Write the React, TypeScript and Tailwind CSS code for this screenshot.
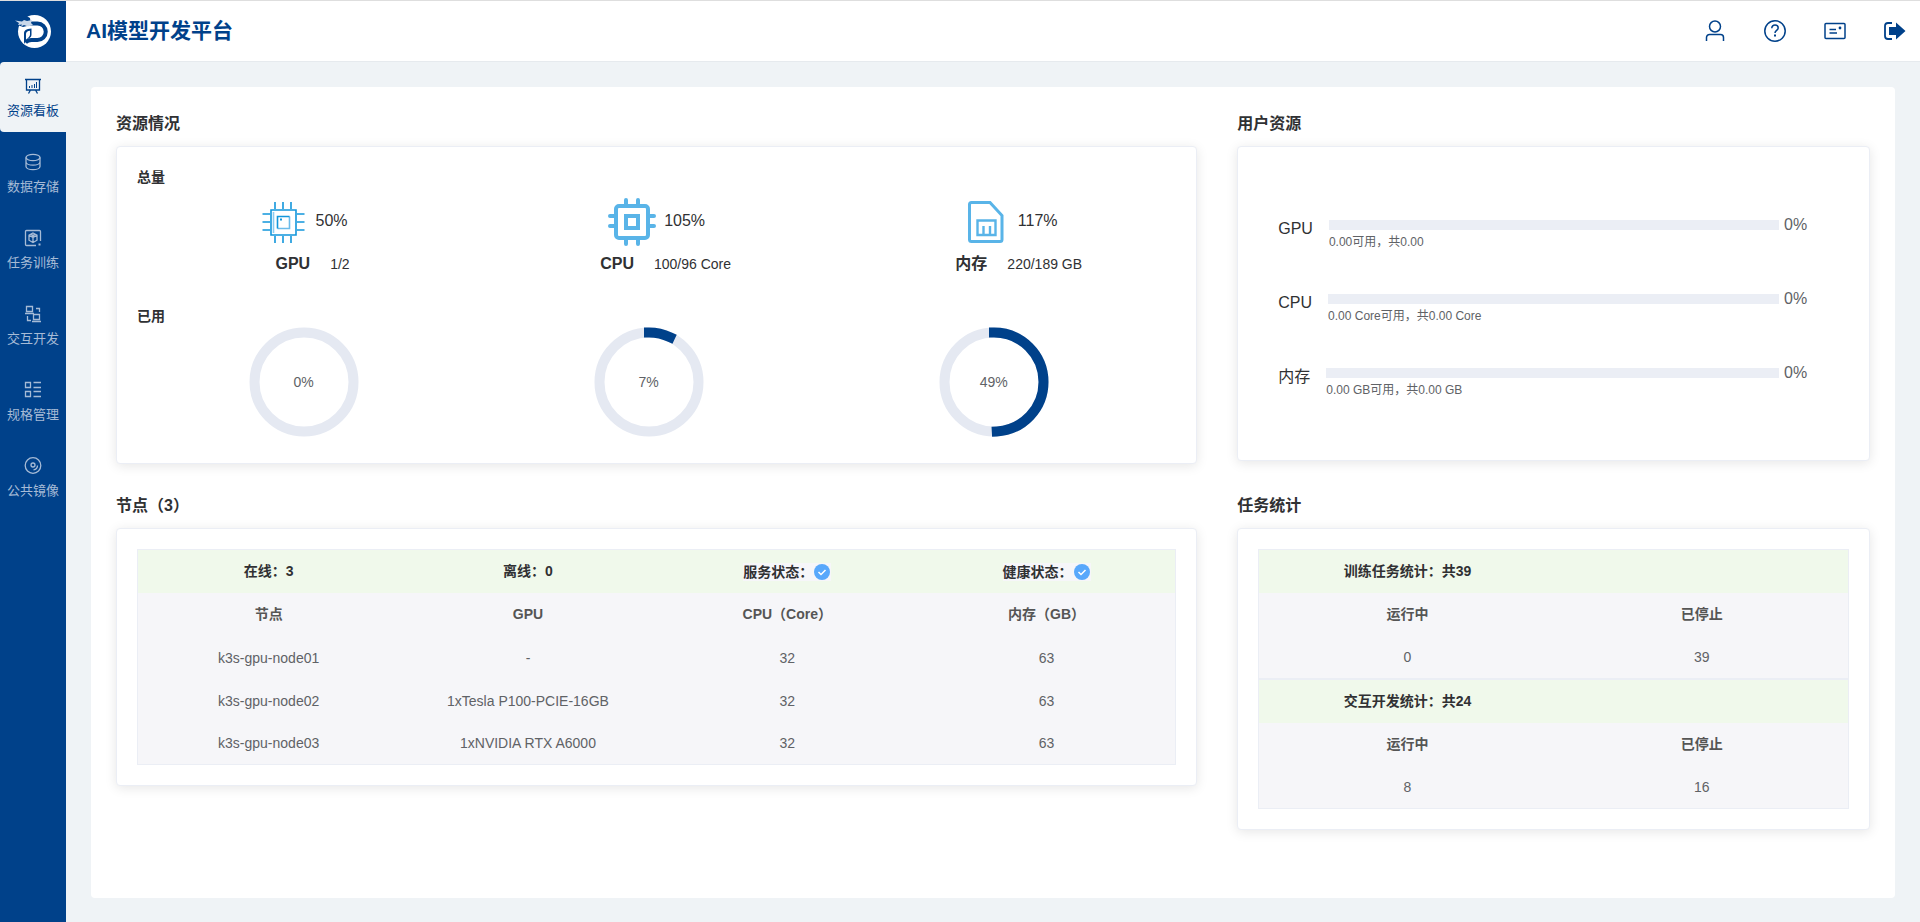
import React from "react";

interface MenuItem {
  label: string;
  icon: React.ReactNode;
}

interface Usage {
  name: string;
  icon: React.ReactNode;
  percent: number;
  amount: string;
  used: number;
}

interface SectionProps {
  title: string;
  children: React.ReactNode;
}

const menu: MenuItem[] = [
  {
    label: "资源看板",
    icon: (
      <>
        <path d="M1 2.500h16M2.500 2.500v10.500h13V2.500M6.500 13l-2 3.500M11.500 13l2 3.500" />
        <path d="M5.500 9v2M8 8v3M10.500 7v4M12.500 5v6" strokeWidth="1" />
      </>
    ),
  },
  {
    label: "数据存储",
    icon: (
      <>
        <ellipse cx="9" cy="4.500" rx="7" ry="3.200" />
        <path d="M2 4.500v9c0 1.800 3.100 3.200 7 3.200s7-1.400 7-3.200v-9M2 9c0 1.800 3.100 3.200 7 3.200s7-1.400 7-3.200" />
      </>
    ),
  },
  {
    label: "任务训练",
    icon: (
      <>
        <path d="M12 16.500H2.500a1 1 0 0 1-1-1v-13a1 1 0 0 1 1-1h13a1 1 0 0 1 1 1V12" />
        <path d="M9 4l4 2.200v5L9 13.500l-4-2.300v-5zM5 6.200l4 2.300 4-2.300M9 8.500v5M7 5.200l4 2.200M11 5.200L7 7.400" />
        <path d="M14.500 15.500h2" strokeWidth="2" />
      </>
    ),
  },
  {
    label: "交互开发",
    icon: (
      <path d="M2.500 1.500h6v5h-6zM1 8.500h9M12 3.500h3.500V7M3.500 11v4.500H7M9.500 9.500h6v5h-6zM8 16.500h9" />
    ),
  },
  {
    label: "规格管理",
    icon: (
      <path d="M1.500 1.500h5v5h-5zM1.500 10.500h5v5h-5zM9.500 1.500H17M9.500 6.500H17M9.500 10.500H17M9.500 15.500H17" />
    ),
  },
  {
    label: "公共镜像",
    icon: (
      <>
        <circle cx="9" cy="8.500" r="7.800" />
        <circle cx="9" cy="8" r="2" />
        <path d="M13.500 8.500a4.500 4.500 0 0 1-4 4.300" />
      </>
    ),
  },
];

const GpuIcon = () => (
  <svg viewBox="0 0 48 48" className="size-12" fill="none" stroke="#1296db" strokeWidth="1.600">
    <path d="M11 12h25v25H11z" />
    <path d="M15 4v7M23 4v7M31 4v7M15 38v7M23 38v7M31 38v7M2.500 16H10M2.500 24H10M2.500 32H10M37 16h7.500M37 24h7.500M37 32h7.500" />
    <path d="M13.500 14v21" stroke="#8ccbf0" />
    <path d="M29.500 18.500v12h-12" stroke="#6cbcea" />
    <path d="M29.500 18.500h-12v12" />
    <path d="M20 21.500h2" strokeWidth="2" />
  </svg>
);

const CpuIcon = () => (
  <svg viewBox="0 0 48 48" className="size-12" fill="none" stroke="#59b4e8" strokeWidth="4">
    <rect x="8" y="8" width="32" height="32" rx="3" />
    <path d="M18 18h12v12H18z" />
    <path
      d="M18 2v4M30 2v4M18 42v4M30 42v4M2 18h4M2 28h4M42 18h4M42 28h4"
      strokeLinecap="round"
    />
  </svg>
);

const MemoryIcon = () => (
  <svg viewBox="0 0 48 48" className="size-12" fill="none" stroke="#59b4e8" strokeWidth="3">
    <path d="M9.500 4.500h18.500L40 17.500v24a2 2 0 0 1-2 2H9.500a2 2 0 0 1-2-2v-35a2 2 0 0 1 2-2z" />
    <path d="M15.500 22.500h18V37h-18zM21.500 28v9M28 28v9" strokeWidth="2.400" />
  </svg>
);

const usages: Usage[] = [
  { name: "GPU", icon: <GpuIcon />, percent: 50, amount: "1/2", used: 0 },
  { name: "CPU", icon: <CpuIcon />, percent: 105, amount: "100/96 Core", used: 7 },
  { name: "内存", icon: <MemoryIcon />, percent: 117, amount: "220/189 GB", used: 49 },
];

const quotas = [
  { name: "GPU", percent: 0, text: "0.00可用，共0.00" },
  { name: "CPU", percent: 0, text: "0.00 Core可用，共0.00 Core" },
  { name: "内存", percent: 0, text: "0.00 GB可用，共0.00 GB" },
];

const nodes = [
  { name: "k3s-gpu-node01", gpu: "-", cpu: 32, memory: 63 },
  { name: "k3s-gpu-node02", gpu: "1xTesla P100-PCIE-16GB", cpu: 32, memory: 63 },
  { name: "k3s-gpu-node03", gpu: "1xNVIDIA RTX A6000", cpu: 32, memory: 63 },
];

const stats = [
  { title: "训练任务统计：共39", running: 0, stopped: 39 },
  { title: "交互开发统计：共24", running: 8, stopped: 16 },
];

const Logo = () => (
  <svg viewBox="0 0 36 36" className="size-9" fill="none">
    <circle cx="19.500" cy="17.500" r="16.500" fill="#fff" />
    <path
      d="M12 9.500h10.500a8 8 0 0 1 0 16.500h-6c-3 0-4.500.8-6 2.500"
      stroke="#00418a"
      strokeWidth="4"
    />
    <path d="M9 30V19.500c0-3 2-4.500 7.500-5v6c0 3-2.500 4-4.500 4.500z" fill="#00418a" />
    <path d="M11 25.500v-5.500c0-2 1.500-3 4-3.300v3.800c0 2-1.500 3-4 5z" fill="#fff" />
    <path d="M0 3l10-2 5 3 1 7-8 2-8-3z" fill="#00418a" />
    <path
      d="M0 6.500l7 1 2-1.500 3 1 5-1-1 3 2 2-5 1.500-4-1.500-3 1.500 1-2-4 .5 1-2z"
      fill="#c9d8ea"
    />
  </svg>
);

const Section: React.FC<SectionProps> = ({ title, children }) => (
  <section>
    <h2 className="mb-2.5 text-base leading-6 font-bold">{title}</h2>
    <div className="rounded border border-[#ebeef5] bg-white p-5 shadow-[0_2px_12px_rgba(0,0,0,0.1)]">
      {children}
    </div>
  </section>
);

const Ring: React.FC<{ value: number }> = ({ value }) => {
  const length = 2 * Math.PI * 45;
  return (
    <div className="relative size-[110px]">
      <svg viewBox="0 0 100 100" className="size-full -rotate-90" fill="none" strokeWidth="9.100">
        <circle cx="50" cy="50" r="45" stroke="#e5e9f2" />
        {value > 0 && (
          <circle
            cx="50"
            cy="50"
            r="45"
            stroke="#00418a"
            strokeLinecap="square"
            strokeDasharray={`${(length * value) / 100} ${length}`}
          />
        )}
      </svg>
      <span className="absolute inset-0 flex items-center justify-center text-sm text-[#606266]">
        {value}%
      </span>
    </div>
  );
};

const Status: React.FC<{ label: string }> = ({ label }) => (
  <span className="inline-flex h-[18px] items-center bg-[#f6f6f9] align-middle">
    {label}
    <svg viewBox="0 0 18 18" className="size-[18px]" fill="none">
      <circle cx="9" cy="9" r="8" fill="#58a8fb" />
      <path d="M5.500 9l2.500 2.500 4.500-4.500" stroke="#fff" strokeWidth="1.500" />
    </svg>
  </span>
);

const Header = () => (
  <header className="flex h-[61px] items-center justify-between border-b border-[#e6eaee] bg-white pr-3.5 pl-5 text-[#00418a]">
    <h1 className="text-[21px] font-bold">AI模型开发平台</h1>
    <div className="flex items-center gap-[38px]">
      <button aria-label="用户">
        <svg viewBox="0 0 22 22" className="size-[22px]" fill="none" stroke="currentColor" strokeWidth="1.500">
          <circle cx="11" cy="6.500" r="5.500" />
          <path d="M2.500 21v-3.500a3 3 0 0 1 3-3h11a3 3 0 0 1 3 3V21" />
        </svg>
      </button>
      <button aria-label="帮助">
        <svg viewBox="0 0 22 22" className="size-[22px]" fill="none" stroke="currentColor" strokeWidth="1.500">
          <circle cx="11" cy="11" r="10.200" />
          <path d="M7.800 8.200c0-1.900 1.400-3.200 3.200-3.200s3.200 1.200 3.200 3c0 2.300-3.200 2.500-3.200 5" />
          <path d="M11 14.500v2" strokeWidth="2" />
        </svg>
      </button>
      <button aria-label="消息">
        <svg viewBox="0 0 22 22" className="size-[22px]" fill="none" stroke="currentColor" strokeWidth="1.500">
          <rect x="1" y="3.500" width="20" height="15" rx="1" />
          <path d="M5.500 9.500H12M5.500 13H13" />
          <circle cx="16" cy="8" r="1.400" fill="currentColor" stroke="none" />
        </svg>
      </button>
      <button aria-label="退出">
        <svg viewBox="0 0 22 22" className="size-[22px]" fill="none" stroke="currentColor" strokeWidth="1.800">
          <path d="M8 3H4a3 3 0 0 0-3 3v10a3 3 0 0 0 3 3h4" />
          <path d="M5 7h7V2.500l9.500 8.500-9.500 8.500V15H5z" fill="currentColor" stroke="none" />
        </svg>
      </button>
    </div>
  </header>
);

const Sidebar = () => (
  <aside className="w-[66px] shrink-0 bg-[#00418a]">
    <div className="flex h-[61px] items-center justify-center">
      <Logo />
    </div>
    <nav className="flex flex-col gap-1.5">
      {menu.map((item, index) => (
        <a
          key={item.label}
          href="#"
          className={
            index === 0
              ? "flex h-[70px] flex-col items-center gap-1.5 rounded-l bg-[#eff3f6] pt-[15px] text-[#00418a]"
              : "flex h-[70px] flex-col items-center gap-1.5 pt-[15px] text-[#a6bbd6]"
          }
        >
          <svg viewBox="0 0 18 18" className="size-[18px]" fill="none" stroke="currentColor" strokeWidth="1.300">
            {item.icon}
          </svg>
          <span className="text-[13px] leading-5">{item.label}</span>
        </a>
      ))}
    </nav>
  </aside>
);

const ResourceSection = () => (
  <Section title="资源情况">
    <h3 className="mb-[11px] text-sm font-bold">总量</h3>
    <div className="-mx-2.5 grid grid-cols-3">
      {usages.map((item) => (
        <div key={item.name}>
          <div className="flex h-12 items-center justify-center gap-2">
            {item.icon}
            <span className="pb-0.5">{item.percent}%</span>
          </div>
          <div className="mt-2 flex h-5 items-center justify-center gap-5 pl-[18px]">
            <b>{item.name}</b>
            <span className="text-sm">{item.amount}</span>
          </div>
        </div>
      ))}
    </div>
    <h3 className="mt-8 text-sm font-bold">已用</h3>
    <div className="mt-px mr-2.5 mb-1.5 -ml-1.5 grid grid-cols-3 justify-items-center">
      {usages.map((item) => (
        <Ring key={item.name} value={item.used} />
      ))}
    </div>
  </Section>
);

const UserSection = () => (
  <Section title="用户资源">
    <div className="pt-[49px] pb-0.5 pl-5">
      {quotas.map((item) => (
        <div key={item.name} className="flex gap-4 pb-10">
          <span className="leading-[26px]">{item.name}</span>
          <div className="flex-1">
            <div className="flex h-[18px] items-center gap-[5px] text-[#606266]">
              <div
                role="progressbar"
                aria-label={item.name}
                aria-valuenow={item.percent}
                className="h-2.5 flex-1 bg-[#ebeef5]"
              >
                <div className="h-full bg-[#00418a]" style={{ width: `${item.percent}%` }} />
              </div>
              <span className="w-[65px] leading-4">{item.percent}%</span>
            </div>
            <p className="text-xs text-[#606266]">{item.text}</p>
          </div>
        </div>
      ))}
    </div>
  </Section>
);

const tableClass =
  "w-full table-fixed border-separate border-spacing-0 border border-[#ebeef5] bg-[#f6f6f9] text-center text-sm text-[#606266] [&_td]:pl-0.5 [&_th]:pb-0.5 [&_th]:pl-0.5";

const NodeSection = () => (
  <Section title={`节点（${nodes.length}）`}>
    <table className={tableClass}>
      <thead>
        <tr className="h-[43px] bg-[#f0f9eb] text-[#303133]">
          <th>在线：3</th>
          <th>离线：0</th>
          <th>
            <Status label="服务状态：" />
          </th>
          <th>
            <Status label="健康状态：" />
          </th>
        </tr>
        <tr className="h-[43px] text-[#555]">
          <th>节点</th>
          <th>GPU</th>
          <th>CPU（Core）</th>
          <th>内存（GB）</th>
        </tr>
      </thead>
      <tbody>
        {nodes.map((node) => (
          <tr key={node.name} className="h-[43px] last:h-[42px]">
            <td>{node.name}</td>
            <td>{node.gpu}</td>
            <td>{node.cpu}</td>
            <td>{node.memory}</td>
          </tr>
        ))}
      </tbody>
    </table>
  </Section>
);

const TaskSection = () => (
  <Section title="任务统计">
    {stats.map((item) => (
      <table key={item.title} className={tableClass}>
        <thead>
          <tr className="h-[43px] bg-[#f0f9eb] text-[#303133]">
            <th>{item.title}</th>
            <th></th>
          </tr>
          <tr className="h-[43px] text-[#555]">
            <th>运行中</th>
            <th>已停止</th>
          </tr>
        </thead>
        <tbody>
          <tr className="h-[42px]">
            <td>{item.running}</td>
            <td>{item.stopped}</td>
          </tr>
        </tbody>
      </table>
    ))}
  </Section>
);

const App = () => {
  return (
    <div className="flex min-h-screen border-t border-[#dedede] bg-[#eff3f6] font-['Liberation_Sans','Noto_Sans_CJK_SC',sans-serif] text-[#303133]">
      <Sidebar />
      <div className="flex min-w-0 flex-1 flex-col">
        <Header />
        <main className="mx-[25px] mt-[25px] mb-6 flex-1 rounded bg-white p-[25px]">
          <div className="-mx-5 flex items-start">
            <div className="w-[62.5%] px-5">
              <ResourceSection />
            </div>
            <div className="w-[37.5%] px-5">
              <UserSection />
            </div>
          </div>
          <div className="-mx-5 mt-[30px] flex items-start">
            <div className="w-[62.5%] px-5">
              <NodeSection />
            </div>
            <div className="w-[37.5%] px-5">
              <TaskSection />
            </div>
          </div>
        </main>
      </div>
    </div>
  );
};

export default App;
